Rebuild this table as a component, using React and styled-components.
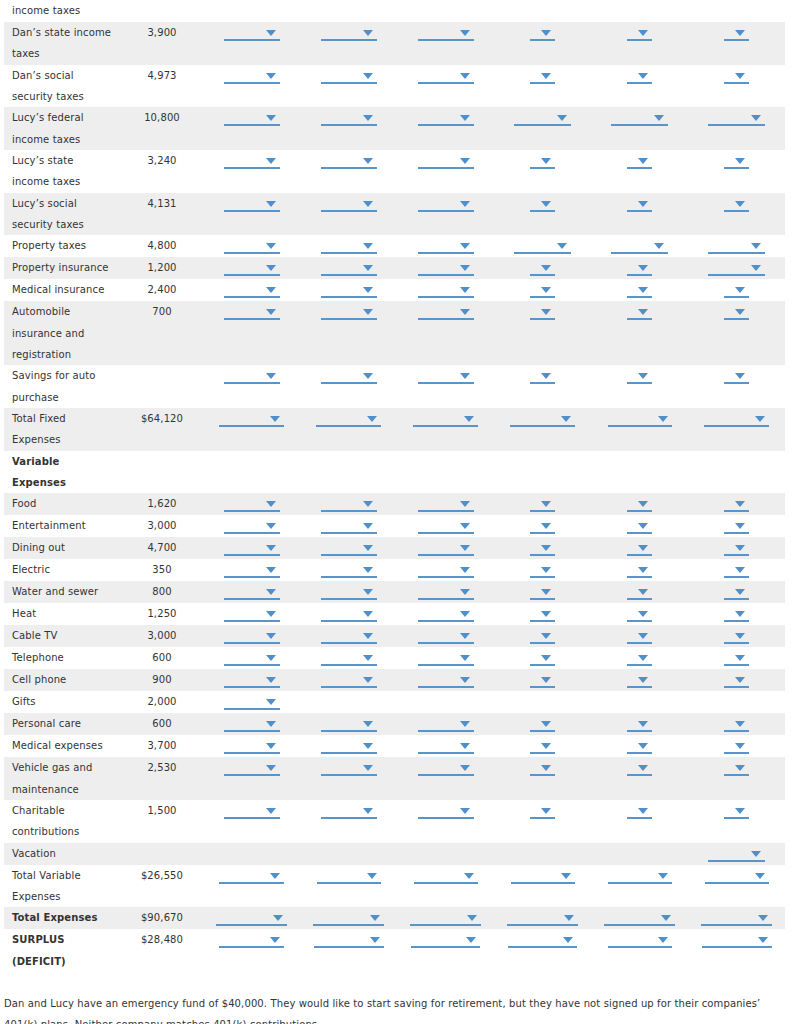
import React from 'react';
import styled, { createGlobalStyle } from 'styled-components';

const GlobalStyle = createGlobalStyle`
  html, body {
    margin: 0;
    padding: 0;
    background: #fff;
  }
  body {
    font-family: "DejaVu Sans", Verdana, sans-serif;
    font-size: 10px;
    letter-spacing: 0.12px;
    color: #333;
  }
`;

// widths of the dropdowns in each of the 6 answer columns (null = no dropdown)
const N = [56, 56, 56, 25, 25, 25];
const WIDE = [56, 56, 56, 57, 57, 57];

// first row is the tail of "Dan's federal income taxes", scrolled off the top
const rows = [
    { label: 'income taxes', value: '', picks: [] },
    { label: 'Dan\u2019s state income taxes', value: '3,900', picks: N },
    { label: 'Dan\u2019s social security taxes', value: '4,973', picks: N },
    { label: 'Lucy\u2019s federal income taxes', value: '10,800', picks: WIDE },
    { label: 'Lucy\u2019s state income taxes', value: '3,240', picks: N },
    { label: 'Lucy\u2019s social security taxes', value: '4,131', picks: N },
    { label: 'Property taxes', value: '4,800', picks: WIDE },
    { label: 'Property insurance', value: '1,200', picks: [56, 56, 56, 25, 25, 57] },
    { label: 'Medical insurance', value: '2,400', picks: N },
    { label: 'Automobile insurance and registration', value: '700', picks: N },
    { label: 'Savings for auto purchase', value: '', picks: N },
    { label: 'Total Fixed Expenses', value: '$64,120', picks: [65, 65, 65, 65, 64, 65] },
    { label: 'Variable Expenses', value: '', picks: [], bold: true },
    { label: 'Food', value: '1,620', picks: N },
    { label: 'Entertainment', value: '3,000', picks: N },
    { label: 'Dining out', value: '4,700', picks: N },
    { label: 'Electric', value: '350', picks: N },
    { label: 'Water and sewer', value: '800', picks: N },
    { label: 'Heat', value: '1,250', picks: N },
    { label: 'Cable TV', value: '3,000', picks: N },
    { label: 'Telephone', value: '600', picks: N },
    { label: 'Cell phone', value: '900', picks: N },
    { label: 'Gifts', value: '2,000', picks: [56, null, null, null, null, null] },
    { label: 'Personal care', value: '600', picks: N },
    { label: 'Medical expenses', value: '3,700', picks: N },
    { label: 'Vehicle gas and maintenance', value: '2,530', picks: N },
    { label: 'Charitable contributions', value: '1,500', picks: N },
    { label: 'Vacation', value: '', picks: [null, null, null, null, null, 57] },
    { label: 'Total Variable Expenses', value: '$26,550', picks: [65, 64, 64, 64, 64, 64] },
    { label: 'Total Expenses', value: '$90,670', picks: [71, 71, 71, 71, 71, 71], bold: true },
    { label: 'SURPLUS (DEFICIT)', value: '$28,480', picks: [65, 70, 69, 69, 64, 70], bold: true },
];

const Dropdown = ({ width }) => (
    <Select $w={width}>
        <Caret />
    </Select>
);

const App = () => {
    return (
        <Page>
            <GlobalStyle />
            <Sheet>
                <colgroup>
                    <col style={{ width: 121 }} />
                    <col style={{ width: 78 }} />
                    {[0, 1, 2, 3, 4, 5].map((i) => <col key={i} style={{ width: 97 }} />)}
                </colgroup>
                <tbody>
                    {rows.map((row, r) => (
                        <Row key={r}>
                            <Label $bold={row.bold}>{row.label}</Label>
                            <Amount>{row.value}</Amount>
                            {[0, 1, 2, 3, 4, 5].map((c) => (
                                <Pick key={c}>
                                    {row.picks[c] ? <Dropdown width={row.picks[c]} /> : null}
                                </Pick>
                            ))}
                        </Row>
                    ))}
                </tbody>
            </Sheet>
            <Note>
                Dan and Lucy have an emergency fund of $40,000. They would like to start saving for retirement,
                but they have not signed up for their companies’ 401(k) plans. Neither company matches 401(k) contributions.
            </Note>
        </Page>
    );
};

const Page = styled.div`
    padding: 0 4px;
`;

const Sheet = styled.table`
    width: 781px;
    border-collapse: collapse;
    border-spacing: 0;
    table-layout: fixed;
    line-height: 21.33px;
`;

const Row = styled.tr`
    &:nth-child(even) {
        background: #eeeeee;
    }
`;

const Label = styled.td`
    padding: 0 12.5px 0 8px;
    height: 22px;
    vertical-align: top;
    font-weight: ${(p) => (p.$bold ? 'bold' : 'normal')};
`;

const Amount = styled.td`
    padding: 0 4px 0 0;
    vertical-align: top;
    text-align: center;
`;

const Pick = styled.td`
    padding: 0;
    vertical-align: top;
`;

const Select = styled.div`
    box-sizing: border-box;
    width: ${(p) => p.$w}px;
    height: 19px;
    margin: 0 auto;
    padding: 0 4px 3px 0;
    border-bottom: 2px solid #5795cb;
    display: flex;
    justify-content: flex-end;
    align-items: flex-end;
`;

const Caret = styled.span`
    width: 0;
    height: 0;
    border-left: 5.5px solid transparent;
    border-right: 5.5px solid transparent;
    border-top: 6px solid #4f8fca;
`;

const Note = styled.p`
    width: 781px;
    margin: 21px 0 0;
    line-height: 21.33px;
`;

export default App;
